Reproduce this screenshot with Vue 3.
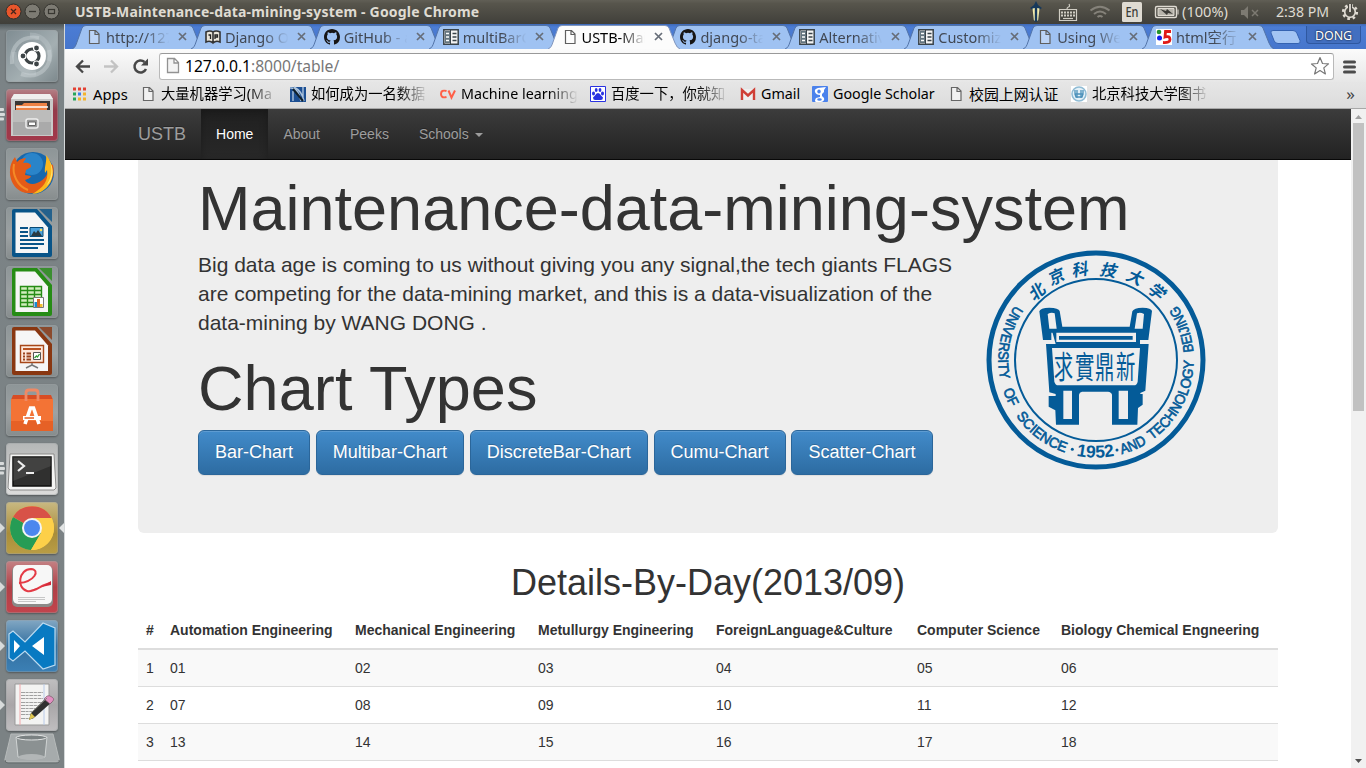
<script setup>
const tabs = [
  { icon: 'doc', label: 'http://127' },
  { icon: 'book', label: 'Django On' },
  { icon: 'github', label: 'GitHub - a' },
  { icon: 'panel', label: 'multiBarC' },
  { icon: 'doc', label: 'USTB-Mai', active: true },
  { icon: 'github', label: 'django-ta' },
  { icon: 'panel', label: 'Alternativ' },
  { icon: 'panel', label: 'Customiz' },
  { icon: 'doc', label: 'Using We' },
  { icon: 'five', label: 'html空行' },
]
const bookmarks = [
  { icon: 'apps', label: 'Apps', cls: 'w70' },
  { icon: 'doc', label: '大量机器学习(Ma', cls: 'w148', fade: true },
  { icon: 'net', label: '如何成为一名数据', cls: 'w150', fade: true },
  { icon: 'cv', label: 'Machine learning', cls: 'w150', fade: true },
  { icon: 'baidu', label: '百度一下，你就知', cls: 'w150', fade: true },
  { icon: 'gmail', label: 'Gmail', cls: 'w72' },
  { icon: 'scholar', label: 'Google Scholar', cls: 'w138' },
  { icon: 'doc', label: '校园上网认证', cls: 'w121' },
  { icon: 'lib', label: '北京科技大学图书', cls: 'w150', fade: true },
]
const launchers = [
  { id: 'dash' }, { id: 'files', marks: 3 }, { id: 'firefox' }, { id: 'writer' }, { id: 'calc' }, { id: 'impress' },
  { id: 'store' }, { id: 'terminal', marks: 3 }, { id: 'chrome', marks: 1, focus: true }, { id: 'pdf', marks: 1 },
  { id: 'code', marks: 1 }, { id: 'gedit', marks: 1 },
]
const buttons = ['Bar-Chart', 'Multibar-Chart', 'DiscreteBar-Chart', 'Cumu-Chart', 'Scatter-Chart']
const heads = ['#', 'Automation Engineering', 'Mechanical Engineering', 'Metullurgy Engineering', 'ForeignLanguage&Culture', 'Computer Science', 'Biology Chemical Engneering']
const rows = [
  ['1', '01', '02', '03', '04', '05', '06'],
  ['2', '07', '08', '09', '10', '11', '12'],
  ['3', '13', '14', '15', '16', '17', '18'],
]
// Seal lettering: start and end angles in degrees, counter-clockwise from the left edge.
const R = 293
const arc = (a, b) => {
  const p = (d) => {
    const t = (d * Math.PI) / 180
    return `${(348 - R * Math.cos(t)).toFixed(1)} ${(358 + R * Math.sin(t)).toFixed(1)}`
  }
  return `M${p(a)}A${R} ${R} 0 0 0 ${p(b + 6)}`
}
const ring = [
  ['UNIVERSITY', -34, 11.5], ['OF', 18, 29], ['SCIENCE', 35, 71.5], ['1952', 78.3, 101],
  ['AND', 105.3, 121.5], ['TECHNOLOGY', 125, 179.8], ['BEIJING', 184.8, 214],
].map(([t, a, b]) => ({ t, d: arc(a, b), len: ((b - a) * Math.PI * R) / 180 }))
const han = [['北', 172, 150, -40], ['京', 230, 106, -25], ['科', 302, 85, -9], ['技', 388, 88, 9], ['大', 468, 110, 25], ['学', 533, 152, 41]]
const ding = [['求', 250], ['實', 314], ['鼎', 374], ['新', 437]]
</script>

<template>
  <div class="desktop">
    <header class="panel">
      <div class="wm">
        <svg width="60" height="24" viewBox="0 0 60 24">
          <circle cx="13.500" cy="11.500" r="7.500" fill="#e9562b" stroke="#302f2b" />
          <path d="M11 9l5 5m0-5l-5 5" stroke="#45251b" stroke-width="1.300" />
          <circle cx="32.500" cy="11.500" r="7.500" fill="#7d7b73" stroke="#35342f" />
          <path d="M29 11.500h7" stroke="#383731" stroke-width="1.300" />
          <circle cx="51.500" cy="11.500" r="7.500" fill="#7d7b73" stroke="#35342f" />
          <rect x="48.500" y="9.500" width="6" height="4" fill="none" stroke="#383731" stroke-width="1.200" />
        </svg>
      </div>
      <div class="title">USTB-Maintenance-data-mining-system - Google Chrome</div>
      <div class="tray">
        <svg width="336" height="24" viewBox="1030 0 336 24">
          <path d="M1036 1l2 4 4 3-3 2-1 11-2 1-2-1-1-11-3-2 4-3z" fill="#17395b" />
          <path d="M1032.500 8.500l2.300-.5v13l-1-1zM1039.500 8.500l-2.300-.5v13l1-1z" fill="#f4ecad" />
          <g fill="none" stroke="#d0cdc3" stroke-width="1.200"><path d="M1059.500 9.500h17v11h-17zM1067 9c0-3 4-1 2-5" /><path d="M1061 12.500h14M1061 15.500h14" stroke-dasharray="2 1" stroke-width="2" /><path d="M1063 18.500h10" /></g>
          <g fill="none" stroke="#85827a" stroke-width="2"><path d="M1090.500 10.500q9.500-7.500 19 0" /><path d="M1094 14q6-5 12 0" /><path d="M1097.500 17q2.500-2 5 0" /></g>
          <rect x="1122" y="2" width="20" height="20" rx="1.500" fill="#dfdbd2" />
          <text x="1125.500" y="17" class="en" textLength="13" lengthAdjust="spacingAndGlyphs">En</text>
          <rect x="1155.500" y="6.500" width="21" height="11" rx="1.500" fill="none" stroke="#dfdbd2" stroke-width="1.400" />
          <path d="M1158 8.500h16v7h-16zM1178 9.500v5" fill="#b7b4ab" stroke="#dfdbd2" />
          <path d="M1160 9l6 2 1-2 6 5-5-1-1 2z" fill="#3c3b37" />
          <text x="1182" y="17" class="tt" textLength="46" lengthAdjust="spacingAndGlyphs">(100%)</text>
          <path d="M1241 10h3l4-4v13l-4-4h-3z" fill="#7d7a72" /><path d="M1252 10l6 6m0-6l-6 6" stroke="#7d7a72" stroke-width="1.500" />
          <text x="1276" y="17" class="tt" textLength="53" lengthAdjust="spacingAndGlyphs">2:38 PM</text>
          <circle cx="1350" cy="12" r="6.800" fill="none" stroke="#dfdbd2" stroke-width="2.600" stroke-dasharray="2.600 2.740" />
          <circle cx="1350" cy="12" r="5.300" fill="none" stroke="#dfdbd2" stroke-width="1.700" />
          <path d="M1350 4v8" stroke="#45443e" stroke-width="4" /><path d="M1350 4v8" stroke="#dfdbd2" stroke-width="1.800" />
        </svg>
      </div>
    </header>

    <div class="body">
      <aside class="dock">
        <div v-for="l in launchers" :key="l.id" class="slot">
          <svg width="64" height="52" viewBox="0 0 64 52">
            <g v-if="l.marks === 3" fill="#d8dbdb"><rect x="-2" y="19" width="6" height="3" rx="1" /><rect x="-2" y="24" width="7" height="3" rx="1" /><rect x="-2" y="28.500" width="6" height="3" rx="1" /></g>
            <path v-if="l.marks === 1" d="M0 21l5 5-5 5z" fill="#d8dbdb" />
            <path v-if="l.focus" d="M64 21l-5 5 5 5z" fill="#e2e4e4" />
          </svg>
          <div class="tile" :class="l.id">
            <svg width="52" height="52" viewBox="0 0 52 52">
              <g v-if="l.id === 'dash'">
                <g fill="none" stroke="#d5dcde" stroke-opacity=".4"><path d="M6 34C4 16 15 5 33 8" stroke-width="4" /><path d="M15 44C34 50 47 36 43 20" stroke-width="4" /><path d="M24 5c14 0 23 12 19 26M8 22c0 14 10 22 22 21" stroke-width="5" stroke-opacity=".25" /></g>
                <circle cx="26" cy="26" r="14" fill="#fff" /><circle cx="26" cy="26" r="7" fill="none" stroke="#3d4446" stroke-width="3.200" />
                <g fill="#3d4446" stroke="#fff" stroke-width="1.200"><circle cx="17" cy="26" r="3" /><circle cx="30.500" cy="18" r="3" /><circle cx="30.500" cy="34" r="3" /></g>
              </g>
              <g v-else-if="l.id === 'files'">
                <path d="M8 5h36l3 5v37H5V10z" fill="#c9c9c8" /><path d="M8 5h36l3 5H5z" fill="#efefee" /><path d="M9 12h35v13H9z" fill="#393634" />
                <path d="M10 16h6l2-2h23v10H10z" fill="#ee8244" /><path d="M10 18h32" stroke="#fff" stroke-width="1.500" /><path d="M7 21h38v25H7z" fill="#aaa" /><path d="M7 21h38v12H7z" fill="#bcbcbb" />
                <rect x="20" y="30" width="12" height="9" rx="2" fill="#999" stroke="#eee" stroke-width="1.500" /><path d="M22.500 33h7v3.500h-7z" fill="#fff" stroke="#666" />
              </g>
              <g v-else-if="l.id === 'firefox'">
                <circle cx="27" cy="25" r="21" fill="#1768ad" /><circle cx="26" cy="16" r="11" fill="#3b9be0" opacity=".55" />
                <path d="M4 22c0-5 2-9 5-13l2 5c3-3 6-4 9-4l-3 5c5-1 9 1 8 4l-5 3-1 5 6 1c-1 3-4 3-6 4 2 4 8 5 12 3 8-3 13-10 11-20l5 2c3 14-6 27-20 28C13 47 3 36 4 22z" fill="#e45b17" />
                <path d="M40 7c8 9 9 23 2 31-4 5-10 8-16 8 11-6 17-13 15-24l-2 3c-1-6 2-11 1-18z" fill="#fbb71d" /><path d="M44 14c3 9 1 17-4 24 8-6 8-17 4-24z" fill="#ffe46c" />
                <path d="M8 16c-2 10 3 22 14 26" fill="none" stroke="#f58b27" stroke-width="2" />
              </g>
              <g v-else-if="['writer', 'calc', 'impress'].includes(l.id)" :class="'ink-' + l.id">
                <path d="M8 2h23l15 17v29q0 2-2 2H8q-2 0-2-2V4q0-2 2-2z" class="fillc" /><path d="M9.500 5.500H29l13 15V46H9.500z" fill="#f6f6f6" />
                <path d="M33 2h13v13z" class="fillc" opacity=".8" />
                <g v-if="l.id === 'writer'"><path d="M14 21h8M14 25h8M14 29h8M14 33h24M14 37h24M14 41h18" class="strokec" stroke-width="1.800" /><path d="M24 20.500h13v9H24z" fill="#4aa1dc" stroke="#084a75" /><path d="M25 29l3-5 2 2 2-3 4 6z" fill="#293a42" /><circle cx="35" cy="23" r="1.300" fill="#ffdc54" /></g>
                <g v-if="l.id === 'calc'"><path d="M14.500 20.500h21v20h-21zM14.500 24.500h21M14.500 28.500h21M14.500 32.500h21M14.500 36.500h21M21.500 20v21M28.500 20v21" fill="#d1edbc" class="strokec" stroke-width="1.400" /><path d="M27.500 31.500h10v10h-10z" fill="#fff" stroke="#777" /><path d="M28.500 36h2.500v5h-2.500z" fill="#178bd1" /><path d="M31 33h3v8h-3z" fill="#dd6622" /><path d="M34 38h2.500v3H34z" fill="#f3bf2e" /></g>
                <g v-if="l.id === 'impress'"><path d="M14.500 20.500h23v17h-23z" fill="#fde9dc" stroke="#a74719" stroke-width="1.400" /><path d="M17 24h18" stroke="#b95222" stroke-width="2" /><path d="M17 28.500h8M17 31.500h8M17 34.500h8" stroke="#9a431c" stroke-width="2" stroke-dasharray="2 1.500 6" /><path d="M27.500 27.500h7v7h-7z" fill="#fff" stroke="#555" /><path d="M28.500 33l2-2 1 1 2-3" fill="none" stroke="#339b35" stroke-width="1.300" /><path d="M26 38v2l-6 3m6-3l6 3" fill="none" stroke="#777" stroke-width="1.500" /></g>
              </g>
              <g v-else-if="l.id === 'store'">
                <path d="M7 11h38l2 5v31H5V16z" fill="#d84d24" /><path d="M5 15h42v32H5z" fill="#f37335" /><path d="M5 37h42v10H5z" fill="#e66126" />
                <path d="M20 17V9q0-3 3-3h6q3 0 3 3v8" fill="none" stroke="#ef8965" stroke-width="2.800" />
                <path d="M19 40l5.500-16h3L33 40" fill="none" stroke="#fff" stroke-width="3.600" /><path d="M17 32h18v4H17z" fill="#fff" /><path d="M18.500 34H28" stroke="#e55e25" stroke-width="1.500" />
              </g>
              <g v-else-if="l.id === 'terminal'">
                <path d="M4 11h44l2 34-2 2H4l-2-2z" fill="#f4f4f3" stroke="#8b8b8a" /><path d="M7 14h38v29H7z" fill="#30302f" stroke="#111" stroke-width="1.500" /><path d="M7 14h38v9L7 38z" fill="#fff" opacity=".09" />
                <path d="M12 18l6 5-6 5" fill="none" stroke="#eee" stroke-width="2.200" /><path d="M20 30h8" stroke="#eee" stroke-width="2" />
              </g>
              <g v-else-if="l.id === 'chrome'">
                <circle cx="26" cy="26" r="22" fill="#fcd049" /><path d="M26 26L7 15A22 22 0 0 1 45.500 16H26z" fill="#d85247" /><path d="M26 26L7 15A22 22 0 0 0 25 48L35 31z" fill="#269c55" /><path d="M26 16h19.500A22 22 0 0 1 25 48l10-17z" fill="#fdd049" /><circle cx="26" cy="26" r="10" fill="#f2f4f4" /><circle cx="26" cy="26" r="8" fill="#4b87ee" />
              </g>
              <g v-else-if="l.id === 'pdf'">
                <rect x="6" y="5" width="41" height="41" rx="5" fill="#8b8a88" /><rect x="7" y="4" width="39" height="39" rx="5" fill="#f7f7f7" />
                <path d="M13 22C28 21 35 9 25 8 13 8 10 27 21 30 29 32 35 23 45 22" fill="none" stroke="#e43b46" stroke-width="2" /><path d="M24 29q8 0 21-9v4q-11 2-21 5z" fill="#d42b3a" /><path d="M12 36.500h27M12 38.500h27M12 40.500h18" stroke="#b1b1b1" stroke-width=".7" />
              </g>
              <g v-else-if="l.id === 'code'">
                <path d="M3 14l4-3 12 11L37 3l12 5v37l-12 4L19 31 7 41l-4-3z" fill="#087ac2" stroke="#badaf0" stroke-width="1.200" /><path d="M8 20v13l6-7zM38 17v18L26 26z" fill="#fff" />
              </g>
              <g v-else-if="l.id === 'gedit'">
                <path d="M9 5h34v41H9z" fill="#f3f3f2" stroke="#999" /><path d="M14 5v41" stroke="#f1a8aa" /><path d="M38 5v41" stroke="#b8cae9" />
                <path d="M15 13.500h22M15 16.500h20M15 19.500h22M15 23.500h22M15 26.500h19M15 29.500h22M15 32.500h17M15 35.500h16M15 39.500h13" stroke="#8a8a8a" stroke-width=".8" stroke-dasharray="4 .6 3 .7" />
                <path d="M41 18l5 5-17 15-6 3 2-7z" fill="#30302f" /><path d="M41 17q2-1 5 1t1 4l-3 3-6-5z" fill="#e28fc1" stroke="#705260" stroke-width=".6" /><path d="M25 34l4 4-6 3z" fill="#dfc64e" /><path d="M26 33L41 19" stroke="#85857f" />
              </g>
            </svg>
          </div>
        </div>
        <svg class="trash" width="64" height="35" viewBox="0 0 64 35">
          <path d="M11 1h42l6 25q1 3-3 3H8q-4 0-3-3z" fill="#a6abac" stroke="#b6baba" /><path d="M5 27q0 3 3 3h48q4 0 3-3" fill="none" stroke="#656c6d" />
          <path d="M16 4h31l-2 20q-13 4-27 0z" fill="#8b9192" stroke="#cfd3d3" /><ellipse cx="31.500" cy="4.500" rx="15" ry="2.500" fill="#7a8182" stroke="#e1e3e3" /><ellipse cx="31.500" cy="24" rx="13" ry="3" fill="#b2b6b7" />
        </svg>
      </aside>

      <main class="browser">
        <div class="strip">
          <div v-for="t in tabs" :key="t.label" class="tab" :class="{ active: t.active }">
            <svg class="shape" width="134" height="25" viewBox="0 0 134 25"><path d="M0 25C3 24 4 21 5 18L10 4Q11 1.500 14 1.500H117Q120 1.500 121 4L127 19Q129 24 132 25" /></svg>
            <span class="fav">
              <svg width="16" height="16" viewBox="0 0 16 16">
                <path v-if="t.icon === 'doc'" d="M3.500 1.500h6l3.500 3.500v9.500H3.500zM9 1.500V5.500h4" fill="#fff" fill-opacity=".3" stroke="#5f5f5f" stroke-width="1.200" />
                <g v-else-if="t.icon === 'book'"><path d="M1 3q4-2 7 0 3-2 7 0v10q-4-2-7 1-3-3-7-1zM8 3v10" fill="#e9e4d9" stroke="#333" stroke-width="1.600" /><path d="M3.500 6h2v4M10 10V6h2.500v2H10" fill="none" stroke="#222" stroke-width="1.300" /></g>
                <path v-else-if="t.icon === 'github'" fill="#171515" d="M8 0C3.580 0 0 3.580 0 8c0 3.540 2.290 6.530 5.470 7.590.4.070.55-.17.55-.38v-1.490c-2.230.48-2.700-.94-2.700-.94-.36-.92-.89-1.170-.89-1.170-.73-.5.050-.49.050-.49.800.06 1.230.83 1.230.83.72 1.230 1.880.87 2.340.67.070-.52.280-.88.510-1.080-1.780-.2-3.640-.89-3.640-3.950 0-.87.310-1.590.82-2.150-.08-.2-.36-1.020.08-2.120 0 0 .67-.21 2.200.82a7.600 7.600 0 0 1 4 0c1.530-1.040 2.200-.82 2.200-.82.44 1.100.16 1.920.08 2.120.51.56.82 1.270.82 2.150 0 3.070-1.870 3.750-3.650 3.950.29.250.54.730.54 1.480v2.190c0 .21.150.46.550.38A8 8 0 0 0 16 8c0-4.420-3.580-8-8-8z" />
                <g v-else-if="t.icon === 'panel'"><path d="M.8.800h14.400v14.400H.8z" fill="#f5f5f5" stroke="#39434a" stroke-width="1.500" /><path d="M2 2h5v12H2z" fill="#63747e" /><path d="M7.500 1v14" stroke="#39434a" /><path d="M3 4.500h3M3 8h3M3 11.500h3" stroke="#fff" stroke-width="1.500" /><path d="M9.500 4.500h4M9.500 8h4M9.500 11.500h4" stroke="#39434a" stroke-width="1.700" /></g>
                <g v-else><path d="M0 0h16v16H0z" fill="#fff" /><circle cx="3" cy="3" r="2.300" fill="#25942d" /><circle cx="3.500" cy="9" r="2.500" fill="#1020ed" /><path d="M15 2.500H9.500L9 8q5-1.500 5 2.500 0 3.500-7 3" fill="none" stroke="#e11a17" stroke-width="2.800" /></g>
              </svg>
            </span>
            <span class="tlabel">{{ t.label }}</span>
            <svg class="x" width="9" height="9" viewBox="0 0 9 9"><path d="M1 1l7 7M8 1L1 8" stroke="#666d78" stroke-width="1.700" /></svg>
          </div>
          <svg class="newtab" width="34" height="16" viewBox="0 0 34 16"><path d="M4 1.500h20q3 0 4 3l3 7q1 3-2 3H9q-3 0-4-3L2 4Q1 1.500 4 1.500z" fill="#a2c4f3" stroke="#3563b1" /></svg>
          <div class="user">DONG</div>
        </div>

        <div class="toolbar">
          <svg class="nav" width="94" height="34" viewBox="65 49 94 34">
            <path d="M90 66.500H77m6-6l-6 6 6 6" fill="none" stroke="#474747" stroke-width="2.300" /><path d="M104 66.500h13m-6-6l6 6-6 6" fill="none" stroke="#c3c3c3" stroke-width="2.300" />
            <path d="M146 69a6 6 0 1 1-1.500-7" fill="none" stroke="#474747" stroke-width="2.500" /><path d="M148 58.500v7h-7z" fill="#474747" />
          </svg>
          <div class="omni">
            <svg width="14" height="18" viewBox="0 0 14 18"><path d="M1.500 1.500h7l4 4v10h-11zM8 1.500V6h4.500" fill="#f4f4f4" stroke="#929292" stroke-width="1.300" /></svg>
            <span class="url"><b>127.0.0.1</b>:8000/table/</span>
            <svg class="star" width="20" height="20" viewBox="0 0 20 20"><path d="M10 1.500l2.500 6 6 .4-4.700 4 1.600 6L10 14.500 4.600 18l1.600-6.100L1.500 8l6-.5z" fill="#fff" stroke="#777" stroke-width="1.200" stroke-linejoin="round" /></svg>
          </div>
          <svg class="menu" width="13" height="14" viewBox="0 0 13 14"><path d="M1.500 2h10M1.500 7h10M1.500 12h10" stroke="#4b4b4b" stroke-width="3" stroke-linecap="round" /></svg>
        </div>

        <div class="marks">
          <div v-for="b in bookmarks" :key="b.label" class="mark" :class="[b.cls, b.icon]">
            <svg width="16" height="16" viewBox="0 0 16 16">
              <g v-if="b.icon === 'apps'"><path d="M1 3h3M6 3h3M11 3h3" stroke="#e34133" stroke-width="3" /><path d="M1 8h3" stroke="#27a55a" stroke-width="3" /><path d="M6 8h3" stroke="#3b7ded" stroke-width="3" /><path d="M11 8h3M6 13h3M11 13h3" stroke="#f4b32c" stroke-width="3" /><path d="M1 13h3" stroke="#27a55a" stroke-width="3" /></g>
              <path v-else-if="b.icon === 'doc'" d="M1.500 1.500h6l3.500 3.500v9.500H1.500zM7 1.500V5.500h4" fill="#f1f1f1" stroke="#666" stroke-width="1.200" />
              <g v-else-if="b.icon === 'net'"><path d="M0 1h16v15H0z" fill="#1c4f93" /><path d="M0 2q8-1 11 13M4 1q8 4 10 14M3 15V5M13 1v12" fill="none" stroke="#adc4dd" stroke-width="1.400" /><path d="M3 3l10 12" stroke="#10202b" stroke-width="2" /></g>
              <path v-else-if="b.icon === 'cv'" d="M6.500 5Q1 3.500 1 8t5.500 3M8.500 4.500l3 7 3.500-7" fill="none" stroke="#ff6048" stroke-width="2" />
              <g v-else-if="b.icon === 'baidu'"><path d="M.5.500h15v15H.5z" fill="#fff" stroke="#2932e1" /><g fill="#2932e1"><ellipse cx="3.500" cy="7.500" rx="1.500" ry="2" /><ellipse cx="6.200" cy="4" rx="1.400" ry="2.100" /><ellipse cx="10" cy="4" rx="1.400" ry="2.100" /><ellipse cx="12.500" cy="7.500" rx="1.500" ry="2" /><path d="M8 7q2 0 3 2.500l2 2q0 3-3 2.500H6q-3 .5-3-2.500l2-2Q6 7 8 7z" /></g></g>
              <g v-else-if="b.icon === 'gmail'"><path d="M1 3h14v11H1z" fill="#eee" /><path d="M2 14V4l6 5.500L14 4v10" fill="none" stroke="#cf3f36" stroke-width="2.400" /></g>
              <g v-else-if="b.icon === 'scholar'"><rect width="16" height="16" rx="1" fill="#4b82ec" /><path d="M14 1L6 2Q2 3 3 6t5 3v2l-4 1q-2 3 0 4h5q4-1 3-4l-2-2V8l2-2V4z" fill="#fff" /><ellipse cx="7" cy="5.500" rx="1.700" ry="2" fill="#4b82ec" /><ellipse cx="7.500" cy="13.500" rx="2.300" ry="1.200" fill="#4b82ec" /></g>
              <g v-else><path d="M0 0h16v16H0z" fill="#fff" /><circle cx="8" cy="8" r="7" fill="#e3f0f7" stroke="#8ebbd4" stroke-width="1.500" /><path d="M4 4v4h8V4M6 4v8M10 4v8M4 8l1 3h6l1-3" fill="none" stroke="#4c91ba" stroke-width="1.300" /></g>
            </svg>
            <span class="mlabel" :class="{ fade: b.fade }">{{ b.label }}</span>
          </div>
          <span class="more">»</span>
        </div>

        <div class="view">
          <div class="page">
            <nav class="navbar">
              <div class="container">
                <a class="brand">USTB</a><a class="item on">Home</a><a class="item">About</a><a class="item">Peeks</a><a class="item">Schools <i class="caret"></i></a>
              </div>
            </nav>
            <section class="jumbo">
              <h1>Maintenance-data-mining-system</h1>
              <div class="cols">
                <div class="copy">
                  <p>Big data age is coming to us without giving you any signal,the tech giants FLAGS<br>are competing for the data-mining market, and this is a data-visualization of the<br>data-mining by WANG DONG .</p>
                  <h1 class="types">Chart Types</h1>
                  <div class="btns"><a v-for="b in buttons" :key="b" class="btn">{{ b }}</a></div>
                </div>
                <svg class="seal" width="220" height="220" viewBox="18 28 660 660">
                  <defs><path v-for="(s, i) in ring" :id="'arc' + i" :key="i" :d="s.d" /></defs>
                  <circle cx="348" cy="358" r="321" fill="none" stroke="#045b98" stroke-width="15" />
                  <circle cx="348" cy="358" r="243" fill="none" stroke="#045b98" stroke-width="6" />
                  <text v-for="(s, i) in ring" :key="i" class="ringtext" :class="{ year: s.t === '1952' }"><textPath :href="'#arc' + i" :textLength="s.len" lengthAdjust="spacingAndGlyphs">{{ s.t }}</textPath></text>
                  <circle cx="277" cy="626" r="4.500" fill="#045b98" /><circle cx="411" cy="628" r="4.500" fill="#045b98" />
                  <text v-for="h in han" :key="h[0]" class="han" :transform="`translate(${h[1]} ${h[2]}) rotate(${h[3]}) skewX(-12)`" x="0" y="19">{{ h[0] }}</text>
                  <g fill="#045b98" fill-rule="evenodd">
                    <path d="M178 212q2-10 30-11 28 1 31 10l8 47h202l8-46q4-10 31-11 26 1 28 10l-11 87h-26V276H214v22h-25zM203 220l5 44h22l-6-46q-10-4-21 2zM471 218l-7 46h24l4-44q-11-6-21-2z" />
                    <path d="M217 274h12v30h239v-30h12v36h26l-10 140-15 7v3h7v32l-14 10-2 50h-76V462q-2-8-12-9h-78q-8 1-9 9v90h-69l-2-43-20-11v-32h21v-6l-19-5-10-145h29zM216 322l7 101q3 11 12 11h226q10 0 12-11l7-101zM250 450v85h26v-85zM416 450v85h28v-85z" />
                    <path d="M237 286h221v11H237z" />
                  </g>
                  <g class="ding"><text v-for="d in ding" :key="d[0]" :transform="`translate(${d[1]} 412) scale(1 1.600)`" x="0" y="0">{{ d[0] }}</text></g>
                </svg>
              </div>
            </section>
            <section class="details">
              <h2>Details-By-Day(2013/09)</h2>
              <table>
                <colgroup><col v-for="(h, i) in heads" :key="h" :class="'c' + i" /></colgroup>
                <thead><tr><th v-for="h in heads" :key="h">{{ h }}</th></tr></thead>
                <tbody><tr v-for="r in rows" :key="r[0]"><td v-for="c in r" :key="c">{{ c }}</td></tr></tbody>
              </table>
            </section>
          </div>
          <div class="scroll">
            <svg width="15" height="14" viewBox="0 0 15 14"><path d="M4 10l3.500-4 3.500 4z" fill="#a0a0a0" /></svg>
            <div class="thumb"></div>
            <svg width="15" height="14" viewBox="0 0 15 14"><path d="M4 5l3.500 4L11 5z" fill="#505050" /></svg>
          </div>
        </div>
      </main>
    </div>
  </div>
</template>

<style>
body { overflow: hidden; }
</style>
<style scoped>
* { box-sizing: border-box; }
svg { display: block; flex: none; }
.desktop { width: 1366px; height: 768px; overflow: hidden; display: flex; flex-direction: column; font-family: "Noto Sans", "Noto Sans CJK SC", sans-serif; background: #fff; }
.panel { height: 24px; flex: none; display: flex; align-items: center; background: linear-gradient(#615f56, #57554c 15%, #403f3a); color: #dfdbd2; }
.wm { width: 75px; }
.title { flex: 1; font-weight: 700; font-size: 14px; line-height: 24px; letter-spacing: .18px; white-space: nowrap; }
.en { font: 500 14px "Noto Sans", sans-serif; fill: #3c3b37; }
.tt { font: 14px "Noto Sans", sans-serif; fill: #dfdbd2; }
.body { flex: 1; min-height: 0; display: flex; }
.dock { width: 65px; flex: none; overflow: hidden; padding-top: 6px; background: linear-gradient(#50585b, #7b8386 7px, #7b8284 95%); border-right: 1px solid #d4d8d9; }
.slot { position: relative; height: 59px; }
.tile { position: absolute; left: 6px; top: 0; width: 52px; height: 52px; border-radius: 4px; overflow: hidden; background: linear-gradient(#8d9597, #9da2a3 55%, #868c8d); box-shadow: 0 0 0 1px #9aa1a366 inset, 0 1px 2px #0005; }
.tile.dash { background: linear-gradient(135deg, #7f8c92, #a4afb2 60%, #7c888c); }
.tile.files { background: linear-gradient(#b58086, #943b4a 40%, #a3384a); }
.tile.terminal { background: linear-gradient(#b5b7b7, #dcdcdb); }
.tile.chrome { background: linear-gradient(#c9b982, #a98d3a 60%, #b99d45); }
.tile.pdf { background: linear-gradient(#c38184, #b04047 50%, #c2444c); }
.tile.code { background: linear-gradient(#82a7c3, #326f9f 50%, #3c80b5); }
.tile.gedit { background: linear-gradient(#c0bfc0, #a9a6a8 50%, #c0bec0); }
.ink-writer { --c: #095488; }
.ink-calc { --c: #268c15; }
.ink-impress { --c: #893711; }
.fillc { fill: var(--c); }
.strokec { stroke: var(--c); }
.trash { margin-top: -5px; }
.browser { flex: 1; min-width: 0; display: flex; flex-direction: column; }
.strip { height: 25px; flex: none; display: flex; align-items: flex-start; padding-left: 7px; background: linear-gradient(#3d68b5, #4b7cd4 3px, #4676cc); }
.tab { position: relative; width: 118.900px; height: 25px; flex: none; display: flex; align-items: center; padding-left: 14px; }
.tab.active { z-index: 2; }
.shape { position: absolute; left: 0; top: 0; }
.shape path { fill: #9fc2f2; stroke: #5374a8; stroke-width: 1; }
.active .shape path { fill: #fcfcfc; stroke: #8095bd; }
.fav { position: relative; width: 16px; margin-right: 4px; }
.tlabel { position: relative; width: 66px; margin-right: -4px; white-space: nowrap; font-size: 14.500px; line-height: 24px; color: #414854; -webkit-mask-image: linear-gradient(90deg, #000 58%, transparent 96%); mask-image: linear-gradient(90deg, #000 58%, transparent 96%); }
.active .tlabel { color: #000; }
.x { position: relative; margin-left: 10px; }
.newtab { margin: 5px 0 0 8px; }
.user { margin: 2px 5px 0 auto; width: 55px; height: 18px; border: 1px solid #2f58a0; border-top: 0; border-radius: 0 0 4px 4px; background: #426fc0; color: #fff; font-size: 12.500px; line-height: 19px; text-align: center; letter-spacing: -.1px; text-shadow: 0 0 2px #000; }
.toolbar { height: 33px; flex: none; display: flex; align-items: center; background: linear-gradient(#fbfbfb, #e7e7e7); }
.nav { margin-top: 1px; }
.omni { width: 1175px; height: 27px; margin-top: 1px; border: 1px solid #b9b9b9; border-top-color: #999; border-radius: 3px; background: #fff; display: flex; align-items: center; padding: 0 3px 0 6px; }
.url { flex: 1; margin-left: 5px; font-size: 15.700px; line-height: 24px; color: #777; letter-spacing: -.05px; }
.url b { font-weight: 400; color: #000; }
.menu { margin: 2px 0 0 9px; }
.marks { height: 27px; flex: none; display: flex; align-items: center; padding: 0 11px 3px 7px; background: linear-gradient(#e6e6e6, #dcdcdc); border-bottom: 1px solid #a8a8a8; }
.mark { display: flex; align-items: center; gap: 5px; flex: none; }
.mark.doc { gap: 3px; }
.mark.apps .mlabel { font-size: 14.800px; }
.w70 { width: 70px; } .w148 { width: 148px; } .w150 { width: 150px; } .w72 { width: 72px; } .w138 { width: 138px; } .w121 { width: 121px; }
.mlabel { font-size: 14.300px; line-height: 22px; white-space: nowrap; color: #000; }
.w121 .mlabel { font-size: 14.900px; }
.fade { width: 117px; -webkit-mask-image: linear-gradient(90deg, #000 75%, transparent); mask-image: linear-gradient(90deg, #000 75%, transparent); }
.more { margin-left: auto; font-size: 17px; line-height: 22px; color: #444; }
.view { flex: 1; min-height: 0; display: flex; overflow: hidden; font-family: "Liberation Sans", Arial, sans-serif; color: #333; }
.page { width: 1286px; flex: none; overflow: hidden; }
.navbar { height: 51px; padding: 0 73px; background: linear-gradient(#3c3c3c, #222); border-bottom: 1px solid #080808; }
.container { display: flex; height: 50px; }
.brand { font-size: 18px; line-height: 50px; color: #9d9d9d; padding-right: 15px; text-shadow: 0 -1px 0 #0004; }
.item { font-size: 14px; line-height: 50px; padding: 0 15px; color: #9d9d9d; text-shadow: 0 -1px 0 #0004; white-space: nowrap; }
.on { color: #fff; background: linear-gradient(#202020, #282828); box-shadow: inset 0 3px 9px rgba(0, 0, 0, .25); }
.caret { display: inline-block; margin-left: 2px; vertical-align: middle; border-top: 4px solid; border-left: 4px solid transparent; border-right: 4px solid transparent; }
.jumbo { width: 1140px; height: 373px; margin: 0 73px 30px; padding: 14px 60px 0; background: #eee; border-radius: 0 0 6px 6px; }
h1 { margin: 0; font-size: 63px; line-height: 69px; font-weight: 500; white-space: nowrap; }
.types { letter-spacing: .1px; }
.cols { display: flex; justify-content: space-between; padding: 7px 12px 0 0; }
p { margin: 0 0 17px; font-size: 21px; line-height: 29px; font-weight: 200; white-space: nowrap; }
.btns { display: flex; gap: 5.840px; margin-top: 7px; }
.btn { height: 45px; padding: 9px 16px; font-size: 18px; line-height: 25px; color: #fff; border: 1px solid #245580; border-radius: 6px; background: linear-gradient(#428bca, #2d6ca2); border-color: #2b669a; text-shadow: 0 -1px 0 #0003; box-shadow: inset 0 1px 0 #ffffff26, 0 1px 1px #00000013; }
.ringtext { font: 43px "Liberation Sans", Arial, sans-serif; fill: #045b98; stroke: #045b98; stroke-width: 2; }
.ringtext.year { font-weight: 700; font-size: 52px; stroke: none; }
.han { font: 700 49px "Noto Sans CJK SC", sans-serif; fill: #045b98; text-anchor: middle; }
.ding text { font: 400 58px "Noto Sans CJK TC", sans-serif; fill: #045b98; text-anchor: middle; }
h2 { margin: 0 0 9px; font-size: 36px; line-height: 40px; font-weight: 500; text-align: center; }
.details { width: 1140px; margin: 0 73px; }
table { width: 1140px; table-layout: fixed; border-collapse: separate; border-spacing: 0; font-size: 14px; line-height: 20px; }
th { text-align: left; padding: 8px; border-bottom: 2px solid #ddd; white-space: nowrap; }
td { padding: 8px; border-bottom: 1px solid #ddd; }
tbody tr:nth-child(odd) { background: #f9f9f9; }
.c0 { width: 24px; } .c1 { width: 185px; } .c2 { width: 183px; } .c3 { width: 178px; } .c4 { width: 201px; } .c5 { width: 144px; } .c6 { width: 225px; }
.scroll { width: 15px; display: flex; flex-direction: column; background: #f1f1f1; }
.thumb { width: 11px; height: 288px; margin: 0 2px auto; background: #c1c1c1; }
</style>
